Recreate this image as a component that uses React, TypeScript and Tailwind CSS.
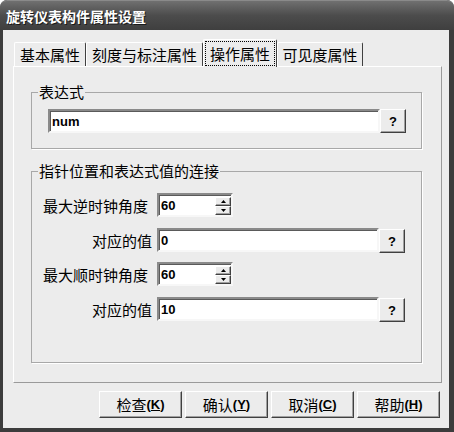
import React from "react";

const cjk = { fontFamily: '"Noto Sans CJK SC", "Noto Sans", sans-serif' };
const latin = { fontFamily: '"Liberation Sans", Arial, sans-serif' };

function Raised({ className = "", children }: { className?: string; children?: React.ReactNode }) {
  return (
    <div
      className={
        "flex items-center justify-center bg-[#ececec] border-t border-l border-t-white border-l-white border-r border-b border-r-[#404040] border-b-[#404040] shadow-[inset_-1px_-1px_0_#a0a0a0] " +
        className
      }
    >
      {children}
    </div>
  );
}

function Field({ value, className = "" }: { value: string; className?: string }) {
  return (
    <div
      className={
        "h-[24px] bg-white border-2 border-t-[#8a8a8a] border-l-[#8a8a8a] border-r-[#f7f7f7] border-b-[#f7f7f7] shadow-[inset_1px_1px_0_#5a5a5a] flex items-center pl-[2px] text-[13px] font-bold text-black leading-none " +
        className
      }
      style={latin}
    >
      {value}
    </div>
  );
}

function QButton() {
  return (
    <Raised className="w-[26px] h-[24px]">
      <span className="text-[13px] font-bold leading-none text-black" style={latin}>
        ?
      </span>
    </Raised>
  );
}

function Spin({ value }: { value: string }) {
  return (
    <div className="w-[76px] h-[24px] bg-white border-2 border-t-[#8a8a8a] border-l-[#8a8a8a] border-r-[#f7f7f7] border-b-[#f7f7f7] shadow-[inset_1px_1px_0_#5a5a5a] flex">
      <div className="flex-1 flex items-center pl-[2px] text-[13px] font-bold leading-none text-black" style={latin}>
        {value}
      </div>
      <div className="w-[16px] flex flex-col pt-[2px]">
        <Raised className="flex-1">
          <svg width="5" height="3" viewBox="0 0 5 3">
            <path d="M2.5 0 L5 3 L0 3 Z" fill="#000" />
          </svg>
        </Raised>
        <Raised className="flex-1">
          <svg width="5" height="3" viewBox="0 0 5 3">
            <path d="M0 0 L5 0 L2.5 3 Z" fill="#000" />
          </svg>
        </Raised>
      </div>
    </div>
  );
}

function Tab({ label, width, selected }: { label: string; width: string; selected?: boolean }) {
  if (selected) {
    return (
      <div
        className={
          "relative z-10 -mb-px h-[28px] bg-[#ececec] border-t border-l border-t-white border-l-white border-r border-r-[#404040] rounded-t-[2px] p-[1px] " +
          width
        }
      >
        <div className="w-full h-full border border-dotted border-black flex items-center justify-center text-[15px] leading-none text-black" style={cjk}>
          {label}
        </div>
      </div>
    );
  }
  return (
    <div
      className={
        "h-[24px] bg-[#ececec] border-t border-l border-t-white border-l-white border-r border-r-[#404040] rounded-t-[2px] flex items-center justify-center text-[15px] leading-none text-black " +
        width
      }
      style={cjk}
    >
      {label}
    </div>
  );
}

function BottomButton({ label, key1 }: { label: string; key1: string }) {
  return (
    <Raised className="w-[83px] h-[27px]">
      <span className="text-[15px] leading-none text-black" style={cjk}>
        {label}
      </span>
      <span className="text-[13px] font-bold leading-none text-black" style={latin}>
        (<span className="underline">{key1}</span>)
      </span>
    </Raised>
  );
}

export default function App() {
  return (
    <div className="w-[454px] h-[432px] flex flex-col bg-[#3c3c3c] rounded-t-[7px] overflow-hidden">
      <div className="h-[30px] shrink-0 flex items-center pl-[6px] bg-linear-to-b from-[#707070] via-[#4c4c4c] to-[#3f3f3f] rounded-t-[7px] border-t border-[#8a8a8a]">
        <span
          className="text-white text-[14px] font-bold leading-none [text-shadow:1px_1px_0_#1a1a1a]"
          style={cjk}
        >
          旋转仪表构件属性设置
        </span>
      </div>
      <div className="flex-1 ml-[3px] mr-[5px] mb-[4px] bg-[#ececec] flex flex-col">
        <div className="pt-[9px] pl-[11px] h-[36px] flex items-end">
          <Tab label="基本属性" width="w-[72px]" />
          <Tab label="刻度与标注属性" width="w-[117px]" />
          <Tab label="操作属性" width="w-[74px]" selected />
          <Tab label="可见度属性" width="w-[86px]" />
        </div>
        <div className="ml-[10px] w-[429px] h-[317px] bg-[#ececec] border-t border-l border-t-white border-l-white border-r border-b border-r-[#9a9a9a] border-b-[#9a9a9a] flex flex-col">
          <div className="relative ml-[17px] mt-[25px] w-[391px] h-[57px] border border-[#a8a8a8] shadow-[1px_1px_0_#ffffff] pl-[16px] pt-[16px]">
            <span
              className="absolute left-[6px] top-[-10px] bg-[#ececec] px-[1px] text-[15px] leading-[18px] text-black"
              style={cjk}
            >
              表达式
            </span>
            <div className="flex items-start">
              <Field value="num" className="w-[332px]" />
              <QButton />
            </div>
          </div>
          <div className="relative ml-[17px] mt-[22px] w-[391px] h-[192px] border border-[#a8a8a8] shadow-[1px_1px_0_#ffffff] pl-[11px] pt-[21px] flex flex-col">
            <span
              className="absolute left-[6px] top-[-10px] bg-[#ececec] px-[1px] text-[15px] leading-[18px] text-black"
              style={cjk}
            >
              指针位置和表达式值的连接
            </span>
            <div className="flex items-center h-[24px]">
              <div className="w-[114px] text-[15px] leading-none text-black" style={cjk}>
                最大逆时钟角度
              </div>
              <Spin value="60" />
            </div>
            <div className="flex items-start h-[24px] mt-[11px]">
              <div className="w-[114px] h-[24px] flex items-center justify-end pr-[5px] text-[15px] leading-none text-black" style={cjk}>
                对应的值
              </div>
              <Field value="0" className="w-[222px]" />
              <div className="mt-[1px]">
                <QButton />
              </div>
            </div>
            <div className="flex items-center h-[24px] mt-[10px]">
              <div className="w-[114px] text-[15px] leading-none text-black" style={cjk}>
                最大顺时钟角度
              </div>
              <Spin value="60" />
            </div>
            <div className="flex items-start h-[24px] mt-[11px]">
              <div className="w-[114px] h-[24px] flex items-center justify-end pr-[5px] text-[15px] leading-none text-black" style={cjk}>
                对应的值
              </div>
              <Field value="10" className="w-[222px]" />
              <div className="mt-[1px]">
                <QButton />
              </div>
            </div>
          </div>
        </div>
        <div className="mt-[8px] flex justify-end gap-[3px] pr-[9px]">
          <BottomButton label="检查" key1="K" />
          <BottomButton label="确认" key1="Y" />
          <BottomButton label="取消" key1="C" />
          <BottomButton label="帮助" key1="H" />
        </div>
      </div>
    </div>
  );
}
